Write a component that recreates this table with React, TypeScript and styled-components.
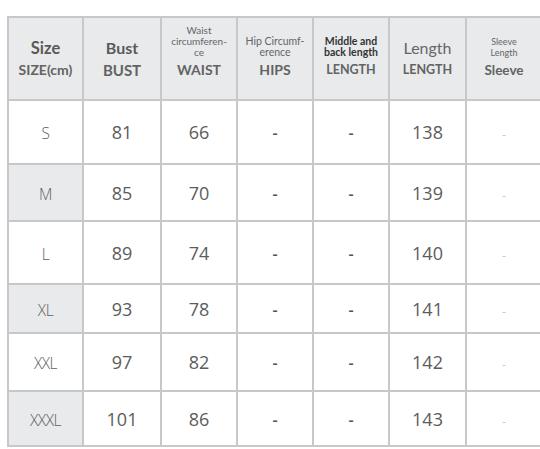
import React from 'react';
import styled, { createGlobalStyle } from 'styled-components';

const GlobalStyle = createGlobalStyle`
  html, body {
    margin: 0;
    padding: 0;
    background: #ffffff;
    overflow: hidden;
  }
`;

type Row = { size: string; bust: string; waist: string; length: string; height: number };

const ROWS: Row[] = [
  { size: 'S', bust: '81', waist: '66', length: '138', height: 64 },
  { size: 'M', bust: '85', waist: '70', length: '139', height: 57 },
  { size: 'L', bust: '89', waist: '74', length: '140', height: 63 },
  { size: 'XL', bust: '93', waist: '78', length: '141', height: 49 },
  { size: 'XXL', bust: '97', waist: '82', length: '142', height: 58 },
  { size: 'XXXL', bust: '101', waist: '86', length: '143', height: 55 },
];

const COL_WIDTHS = [75, 78, 76, 76, 76, 77, 76];

const Page = styled.div`
  padding: 16px 0 0 7px;
  width: 560px;
`;

const Table = styled.table`
  border-collapse: collapse;
  table-layout: fixed;
  width: ${COL_WIDTHS.reduce((a, b) => a + b, 0)}px;
  color: #555555;
`;

const HeadCell = styled.th`
  height: 81px;
  padding: 0;
  border: 2px solid #c6c8ca;
  background: #e8eaec;
  vertical-align: top;
  font-family: Lato, 'Open Sans', sans-serif;
  font-weight: 400;
  text-align: center;
`;

const HeadInner = styled.div`
  display: flex;
  flex-direction: column;
  align-items: center;
`;

const TopBlock = styled.div`
  height: 40px;
  display: flex;
  flex-direction: column;
  justify-content: flex-end;
  align-items: center;
`;

const BigLabel = styled.span<{ $size?: number; $bold?: boolean }>`
  font-size: ${(p) => p.$size ?? 15}px;
  line-height: 20px;
  font-weight: ${(p) => (p.$bold ? 700 : 400)};
  color: ${(p) => (p.$bold ? '#5a5a5a' : '#666666')};
`;

const SmallLabel = styled.span<{ $dark?: boolean; $size?: number }>`
  font-size: ${(p) => p.$size ?? 10}px;
  line-height: 11px;
  font-weight: ${(p) => (p.$dark ? 700 : 400)};
  color: ${(p) => (p.$dark ? '#333333' : '#666666')};
  white-space: nowrap;
`;

const BottomLabel = styled.span<{ $size?: number }>`
  margin-top: 2px;
  font-size: ${(p) => p.$size ?? 14}px;
  line-height: 20px;
  font-weight: 700;
  color: #636363;
`;

const Cell = styled.td<{ $shaded?: boolean }>`
  padding: 0;
  border: 2px solid #c6c8ca;
  background: ${(p) => (p.$shaded ? '#e8eaec' : '#ffffff')};
  text-align: center;
  vertical-align: middle;
  font-family: 'Open Sans', sans-serif;
  font-size: 18px;
  font-weight: 400;
  color: #5c5c5c;
`;

const SizeText = styled.span`
  font-size: 15.5px;
  font-weight: 300;
  color: #606060;
  letter-spacing: -0.5px;
`;

const Dash = styled.span<{ $light?: boolean }>`
  font-family: 'Open Sans', sans-serif;
  font-size: ${(p) => (p.$light ? 13 : 16)}px;
  font-weight: ${(p) => (p.$light ? 300 : 600)};
  color: ${(p) => (p.$light ? '#b0b0b0' : '#555555')};
`;

const App: React.FC = () => (
  <Page>
    <GlobalStyle />
    <Table>
      <colgroup>
        {COL_WIDTHS.map((w, i) => (
          <col key={i} style={{ width: w }} />
        ))}
      </colgroup>
      <thead>
        <tr>
          <HeadCell>
            <HeadInner>
              <TopBlock>
                <BigLabel $size={16.5} $bold>
                  Size
                </BigLabel>
              </TopBlock>
              <BottomLabel $size={14}>SIZE(cm)</BottomLabel>
            </HeadInner>
          </HeadCell>
          <HeadCell>
            <HeadInner>
              <TopBlock>
                <BigLabel $size={16} $bold>
                  Bust
                </BigLabel>
              </TopBlock>
              <BottomLabel $size={15}>BUST</BottomLabel>
            </HeadInner>
          </HeadCell>
          <HeadCell>
            <HeadInner>
              <TopBlock>
                <SmallLabel>Waist</SmallLabel>
                <SmallLabel>circumferen-</SmallLabel>
                <SmallLabel>ce</SmallLabel>
              </TopBlock>
              <BottomLabel>WAIST</BottomLabel>
            </HeadInner>
          </HeadCell>
          <HeadCell>
            <HeadInner>
              <TopBlock>
                <SmallLabel $size={10.5}>Hip Circumf-</SmallLabel>
                <SmallLabel $size={10.5}>erence</SmallLabel>
              </TopBlock>
              <BottomLabel>HIPS</BottomLabel>
            </HeadInner>
          </HeadCell>
          <HeadCell>
            <HeadInner>
              <TopBlock>
                <SmallLabel $dark $size={10.5}>
                  Middle and
                </SmallLabel>
                <SmallLabel $dark $size={10.5}>
                  back length
                </SmallLabel>
              </TopBlock>
              <BottomLabel $size={12.5}>LENGTH</BottomLabel>
            </HeadInner>
          </HeadCell>
          <HeadCell>
            <HeadInner>
              <TopBlock>
                <BigLabel $size={16}>Length</BigLabel>
              </TopBlock>
              <BottomLabel $size={12.5}>LENGTH</BottomLabel>
            </HeadInner>
          </HeadCell>
          <HeadCell>
            <HeadInner>
              <TopBlock>
                <SmallLabel $size={9}>Sleeve</SmallLabel>
                <SmallLabel $size={9}>Length</SmallLabel>
              </TopBlock>
              <BottomLabel $size={13.5}>Sleeve</BottomLabel>
            </HeadInner>
          </HeadCell>
        </tr>
      </thead>
      <tbody>
        {ROWS.map((r, i) => (
          <tr key={r.size} style={{ height: r.height }}>
            <Cell $shaded={i % 2 === 1}>
              <SizeText>{r.size}</SizeText>
            </Cell>
            <Cell>{r.bust}</Cell>
            <Cell>{r.waist}</Cell>
            <Cell>
              <Dash>-</Dash>
            </Cell>
            <Cell>
              <Dash>-</Dash>
            </Cell>
            <Cell>{r.length}</Cell>
            <Cell>
              <Dash $light>-</Dash>
            </Cell>
          </tr>
        ))}
      </tbody>
    </Table>
  </Page>
);

export default App;
